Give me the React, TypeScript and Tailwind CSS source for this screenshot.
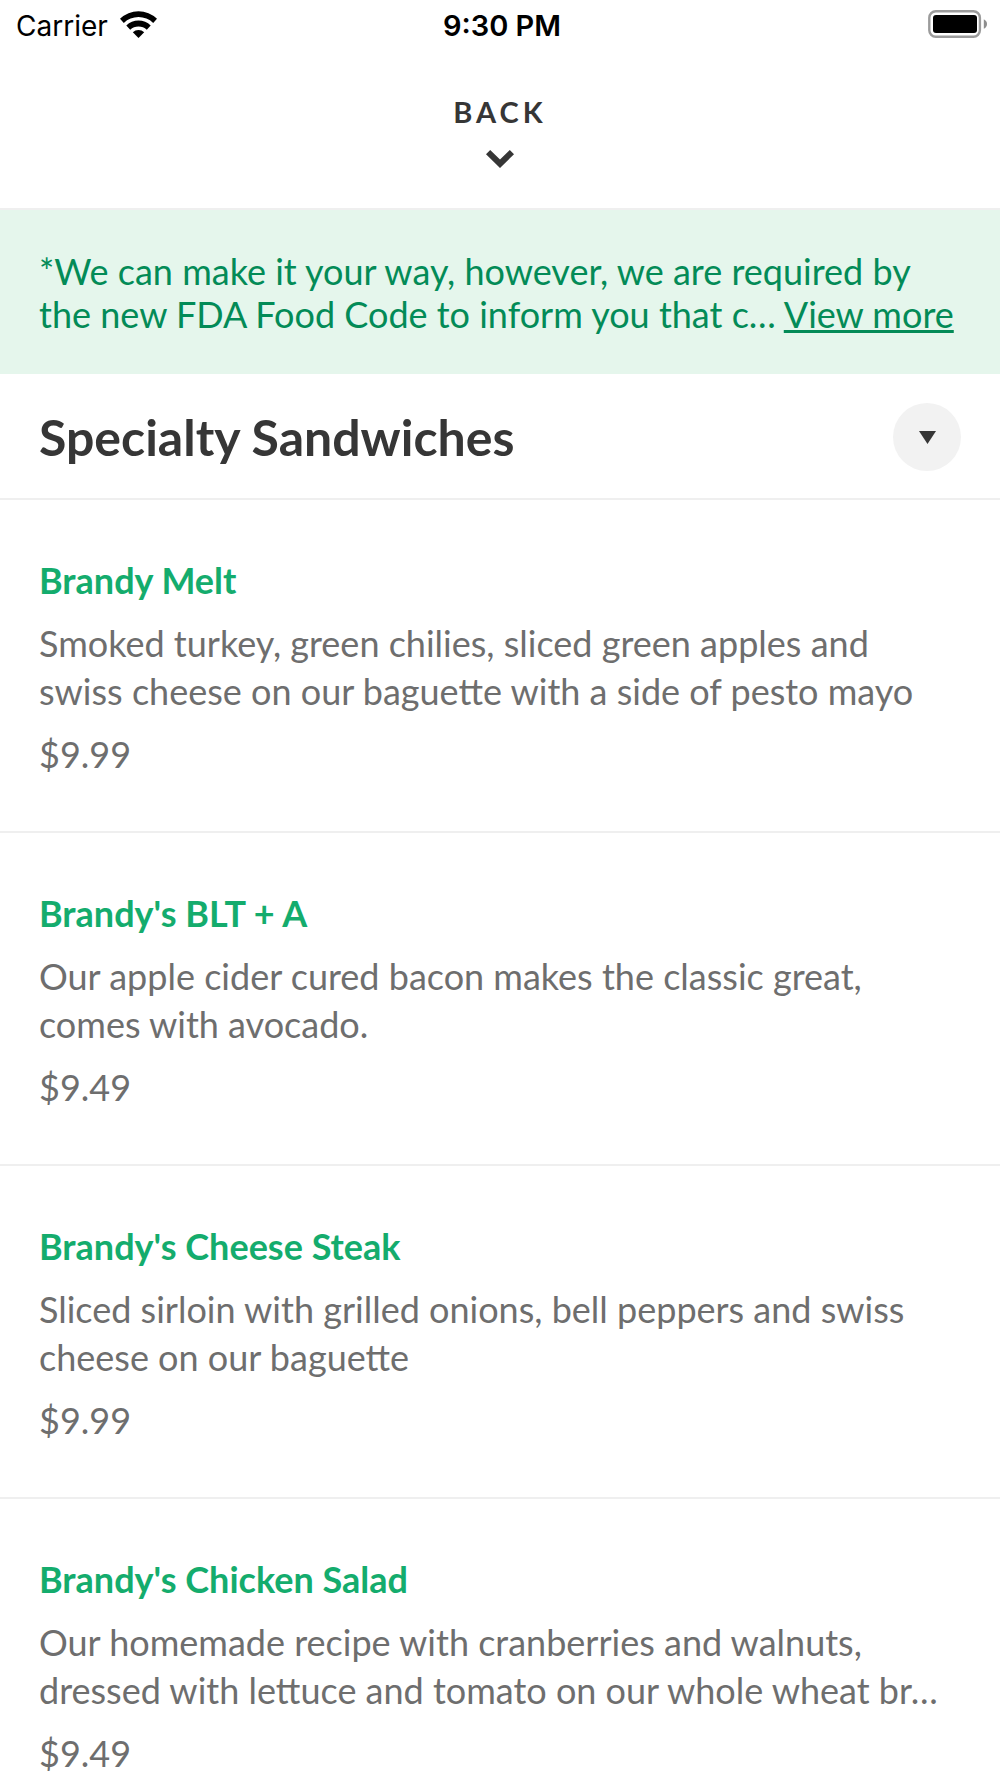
const menu = [
  {
    name: "Brandy Melt",
    description: "Smoked turkey, green chilies, sliced green apples and swiss cheese on our baguette with a side of pesto mayo",
    price: "$9.99",
  },
  {
    name: "Brandy's BLT + A",
    description: "Our apple cider cured bacon makes the classic great, comes with avocado.",
    price: "$9.49",
  },
  {
    name: "Brandy's Cheese Steak",
    description: "Sliced sirloin with grilled onions, bell peppers and swiss cheese on our baguette",
    price: "$9.99",
  },
  {
    name: "Brandy's Chicken Salad",
    description: "Our homemade recipe with cranberries and walnuts, dressed with lettuce and tomato on our whole wheat br…",
    price: "$9.49",
  },
];

function WifiIcon() {
  return <svg viewBox="0 0 37 27" className="h-[27px] w-[37px]" aria-hidden="true">
    <path d="M0 7.8A26.5 26.5 0 0 1 37 7.8L33.2 12A21.2 21.2 0 0 0 3.8 12Z" />
    <path d="M6.3 14.6A17.3 17.3 0 0 1 30.7 14.6L26.8 18.8A12 12 0 0 0 10.2 18.8Z" />
    <path d="M12.8 21.2A8.4 8.4 0 0 1 24.2 21.2L18.5 27Z" />
  </svg>;
}

function BatteryIcon() {
  return <svg viewBox="0 0 60 28" className="h-7 w-[60px]" aria-hidden="true">
    <rect x="1.3" y="1.3" width="50.6" height="25.4" rx="6.5" fill="none" stroke="#9b9b9b" strokeWidth="2.4" />
    <rect x="5" y="5" width="44" height="18" rx="3" />
    <path d="M55.8 9.2Q59 10.8 59 14T55.8 18.8Z" fill="#8e8e8e" />
  </svg>;
}

function StatusBar() {
  return <div className="grid h-12 grid-cols-3 items-center pr-3 pl-4 font-['Inter',sans-serif] text-[28px] leading-[36px] text-black">
    <div className="flex items-center gap-3"><span className="pt-1">Carrier</span><WifiIcon /></div>
    <span className="pt-1 text-center text-[29px] font-semibold">9:30 PM</span>
    <div className="flex justify-end"><BatteryIcon /></div>
  </div>;
}

function MenuItem({ name, description, price }: (typeof menu)[number]) {
  return <li className="border-b-2 border-[#efefef] px-[39px] pt-14 pb-[53px] text-[36px] leading-[48px] text-[#6e6e6e]">
    <h2 className="font-bold text-[#14ac6d]">{name}</h2>
    <p className="mt-[15px]">{description}</p>
    <p className="mt-[15px]">{price}</p>
  </li>;
}

export default function App() {
  return <div className="flex h-screen flex-col overflow-hidden bg-white font-['Lato',sans-serif] text-[#363636]">
    <StatusBar />
    <header className="flex justify-center border-b-2 border-[#efefef] pt-11 pb-10">
      <button className="flex flex-col items-center gap-[18px] text-[29px] leading-[40px] font-bold tracking-[4px]">
        <span>BACK</span>
        <svg viewBox="0 0 28 18" className="h-[18px] w-7" aria-hidden="true">
          <path d="M0 4.2L4.2 0L14 9.6L23.8 0L28 4.2L14 18Z" fill="currentColor" />
        </svg>
      </button>
    </header>
    <main className="min-h-0 flex-1 overflow-y-auto">
      <p className="bg-[#e5f6ec] px-[39px] pt-10 pb-[38px] text-[36px] leading-[43px] text-[#038b57]">
        *We can make it your way, however, we are required by the new FDA Food Code to inform you that c… <a href="#more" className="underline">View more</a>
      </p>
      <section>
        <div className="flex items-center justify-between border-b-2 border-[#efefef] px-[39px] pt-[29px] pb-[27px]">
          <h1 className="text-[50px] leading-[60px] font-bold">Specialty Sandwiches</h1>
          <button className="grid size-[68px] place-items-center rounded-full bg-[#f2f2f2]" aria-label="Choose a section">
            <svg viewBox="0 0 17 13" className="h-[13px] w-[17px]" aria-hidden="true"><path d="M0 0H17L8.5 13Z" fill="currentColor" /></svg>
          </button>
        </div>
        <ul>
          {menu.map((item) => <MenuItem key={item.name} {...item} />)}
        </ul>
      </section>
    </main>
  </div>;
}
